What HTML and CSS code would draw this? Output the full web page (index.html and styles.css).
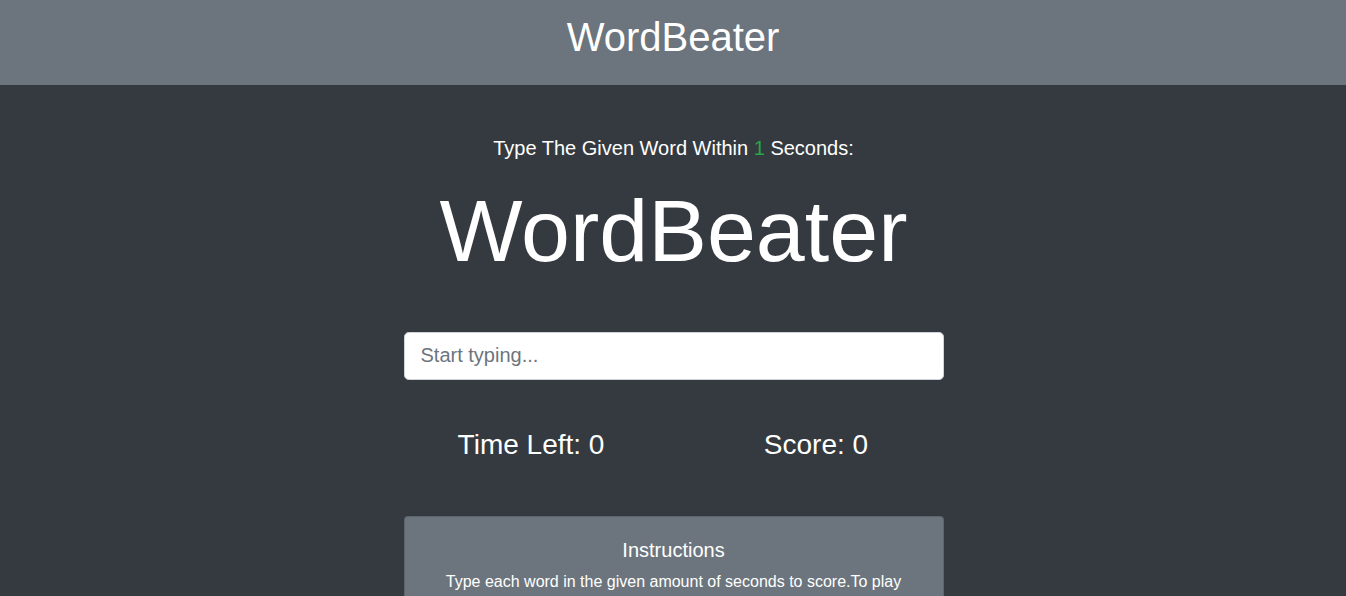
FILE: index.html
```html
<!DOCTYPE html>
<html lang="en">
<head>
<meta charset="utf-8">
<title>WordBeater</title>
<link rel="stylesheet" href="styles.css">
</head>
<body>
  <header class="topbar">
    <h1 class="brand">WordBeater</h1>
  </header>
  <main class="main">
    <div class="column">
      <p class="lead">Type The Given Word Within <span class="secs">1</span> Seconds:</p>
      <h2 class="current-word">WordBeater</h2>
      <input class="word-input" type="text" placeholder="Start typing..." autofocus>
      <div class="stats">
        <h3 class="stat">Time Left: <span>0</span></h3>
        <h3 class="stat">Score: <span>0</span></h3>
      </div>
      <div class="card">
        <h5 class="card-title">Instructions</h5>
        <p class="card-text">Type each word in the given amount of seconds to score.To play again, just type the current word. Your score will reset.</p>
      </div>
    </div>
  </main>
</body>
</html>
```
FILE: styles.css
```css
html, body {
  margin: 0;
  padding: 0;
}
body {
  font-family: "Liberation Sans", Arial, sans-serif;
  background: #343a40;
  color: #fff;
  font-size: 16px;
  line-height: 1.5;
}
.topbar {
  background: #6c757d;
  padding: 13px 0 24px;
  text-align: center;
}
.brand {
  margin: 0;
  font-size: 40px;
  line-height: 1.2;
  font-weight: normal;
}
.main {
  display: flex;
  justify-content: center;
  padding-top: 48px;
}
.column {
  width: 540px;
  margin-left: 1px;
  display: flex;
  flex-direction: column;
  align-items: stretch;
}
.lead {
  margin: 0 0 15px;
  font-size: 20px;
  line-height: 30px;
  text-align: center;
}
.secs {
  color: #28a745;
}
.current-word {
  margin: 0 0 48px;
  font-size: 88px;
  font-weight: 300;
  line-height: 1.2;
  text-align: center;
}
.word-input {
  box-sizing: border-box;
  height: 48px;
  width: 100%;
  padding: 8px 16px;
  font-family: inherit;
  font-size: 20px;
  line-height: 1.5;
  color: #495057;
  background: #fff;
  border: 1px solid #ced4da;
  border-radius: 4.8px;
  outline: none;
}
.word-input::placeholder {
  color: #6c757d;
}
.stats {
  display: grid;
  grid-template-columns: 1fr 1fr;
  column-gap: 30px;
  margin: 48px 0 55px;
}
.stat {
  margin: 0;
  font-size: 28px;
  font-weight: normal;
  line-height: 1.2;
  text-align: center;
}
.card {
  background: #6c757d;
  border: 1px solid rgba(0,0,0,.125);
  border-radius: 4px;
  padding: 21px 20px 20px;
  text-align: center;
}
.card-title {
  margin: 0 0 8px;
  font-size: 20px;
  font-weight: normal;
  line-height: 1.2;
}
.card-text {
  margin: 0;
  font-size: 16px;
  line-height: 24px;
}
```
